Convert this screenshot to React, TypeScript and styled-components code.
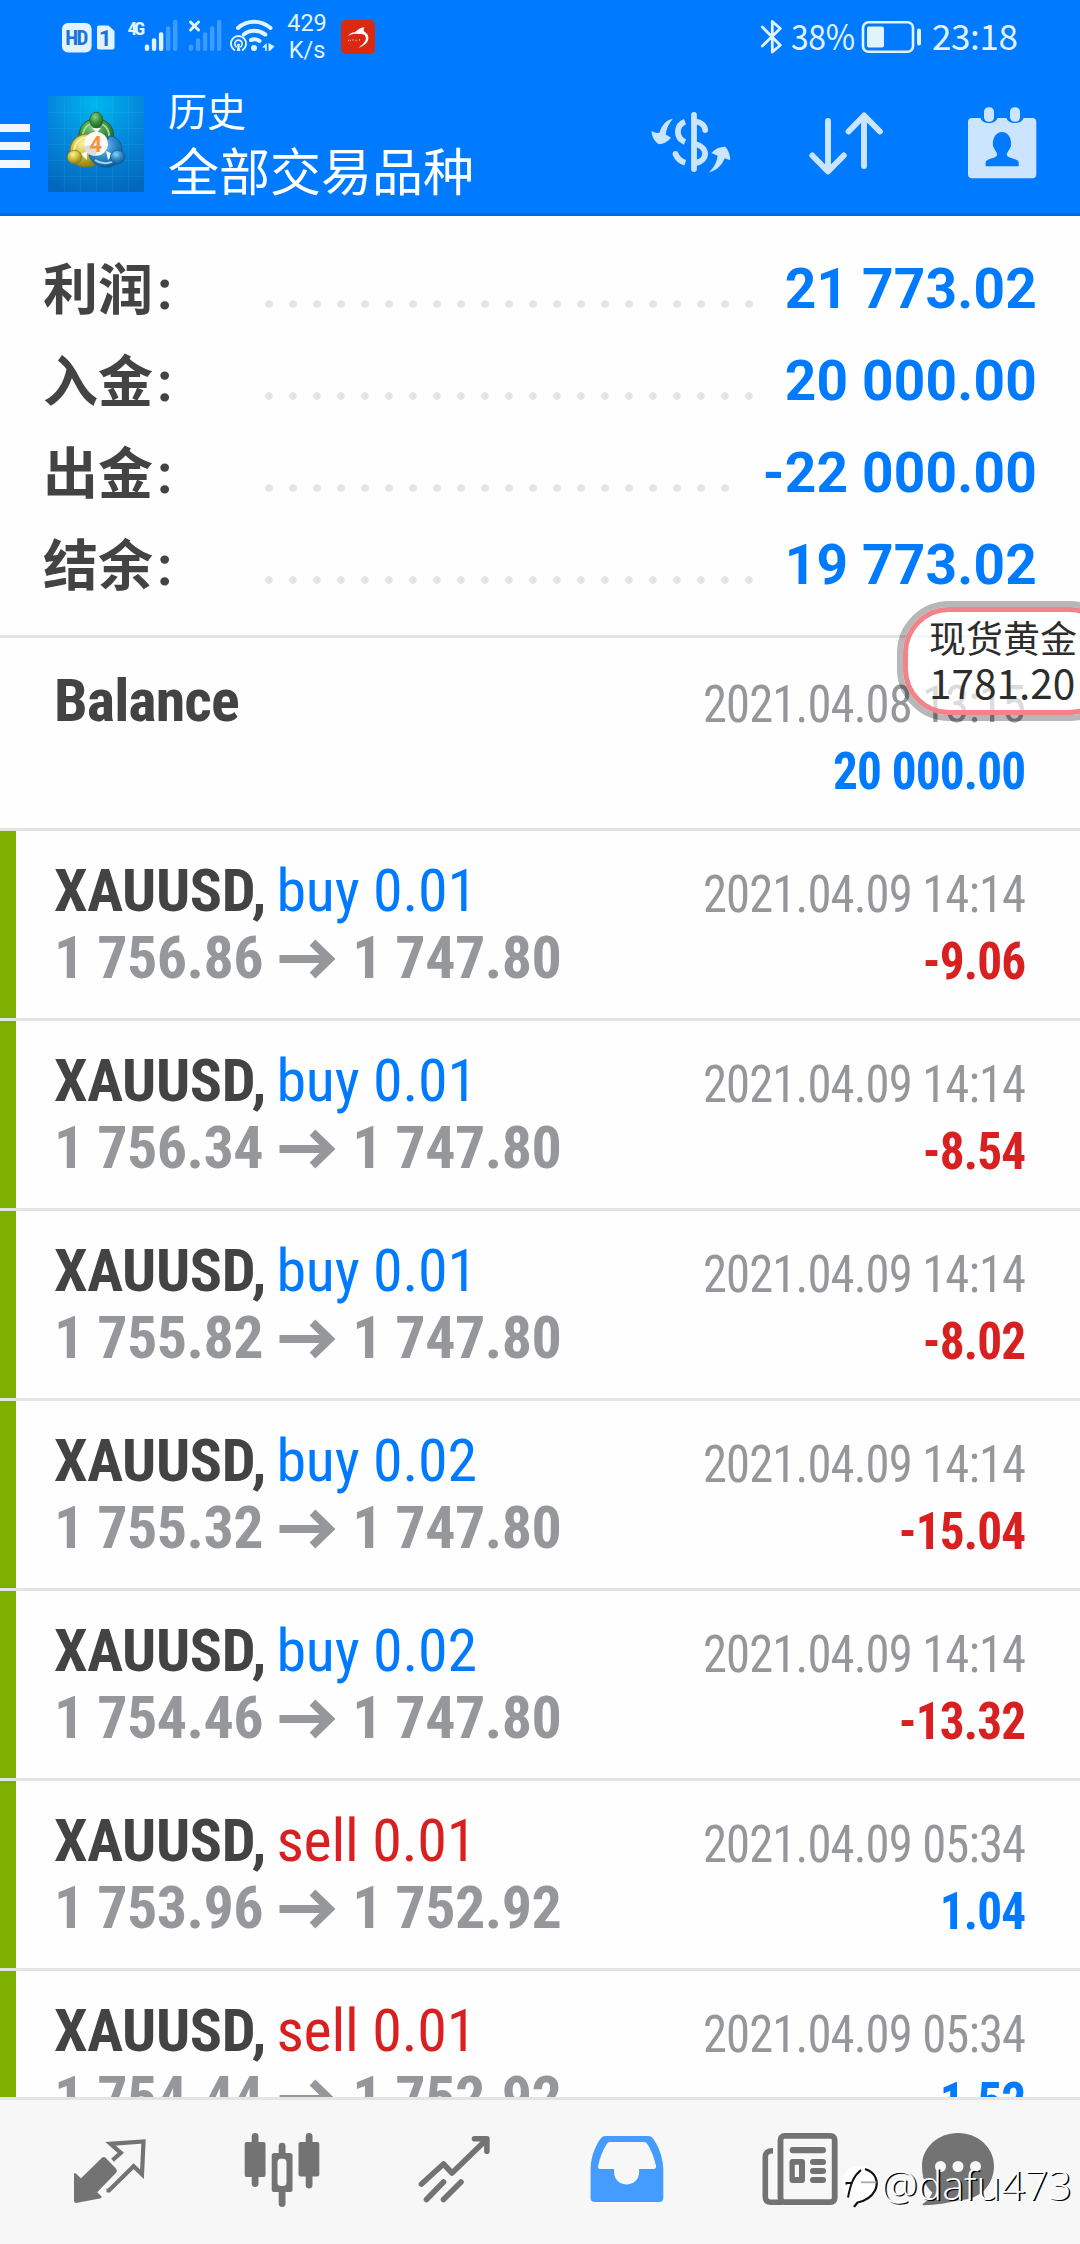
import React from "react";
import styled, { createGlobalStyle } from "styled-components";

const BLUE = "#007aff";
const RED = "#d92020";
const INK = "#434343";
const GREY = "#96979b";
const LINE = "#e4e4e4";
const STATUS = "#e0f3ff";
const ACTION = "#cce5ff";
const TAB = "#737373";

const GlobalStyle = createGlobalStyle`
  *, *::before, *::after { box-sizing: border-box; }
  body { margin: 0; background: #fff; }
  svg { display: block; flex: none; }
`;

const Screen = styled.div`
  position: relative;
  display: flex;
  flex-direction: column;
  width: 1080px;
  height: 2244px;
  overflow: hidden;
  background: #fefefe;
  font-family: Roboto, "Noto Sans CJK SC", sans-serif;
`;

/* ---------- header ---------- */

const Header = styled.header`
  flex: none;
  height: 216px;
  background: ${BLUE};
  border-bottom: 3px solid #0069db;
`;

const StatusBar = styled.div`
  display: flex;
  align-items: center;
  height: 73px;
  padding: 0 60px;
  color: ${STATUS};
`;

const NetSpeed = styled.div`
  width: 48px;
  margin: 0 10px 0 7px;
  font-size: 23.5px;
  line-height: 27px;
  text-align: center;
`;

const Spacer = styled.div`
  flex: 1;
`;

const StatusText = styled.div<{ $width: number; $left: number; $narrow?: boolean }>`
  width: ${(p) => p.$width}px;
  margin: -3px 0 0 ${(p) => p.$left}px;
  font-family: "Noto Sans CJK SC", sans-serif;
  font-size: 35px;
  line-height: 70px;
  letter-spacing: -0.4px;
  white-space: nowrap;
  transform: ${(p) => (p.$narrow ? "scaleX(0.91)" : "none")};
  transform-origin: left;
`;

const Toolbar = styled.div`
  display: flex;
  align-items: flex-start;
  padding: 23px 42px 0 0;
`;

const Burger = styled.div`
  display: grid;
  gap: 10px;
  width: 30px;
  margin: 28px 18px 0 0;
`;

const BurgerBar = styled.span`
  height: 8px;
  background: #f0f7ff;
`;

const Titles = styled.div`
  flex: 1;
  margin: -12px 0 0 24px;
  color: #fff;
  font-family: "Noto Sans CJK SC", sans-serif;
`;

const Title = styled.div`
  font-size: 39px;
  line-height: 50px;
`;

const Subtitle = styled.div`
  font-size: 51px;
  line-height: 70px;
`;

const Actions = styled.div`
  display: grid;
  grid-template-columns: 157px 160px 72px;
`;

/* ---------- summary ---------- */

const Summary = styled.section`
  flex: none;
  height: 422px;
  padding: 27px 43px 0 43px;
  border-bottom: 3px solid ${LINE};
`;

const SummaryRow = styled.div`
  display: flex;
  height: 92px;
  line-height: 92px;
  font-size: 55px;
`;

const SummaryLabel = styled.span`
  width: 214px;
  padding-top: 1px;
  color: ${INK};
  font-weight: 700;
`;

const Colon = styled.span`
  margin-left: 4px;
`;

const Leader = styled.span`
  flex: 1;
  margin-right: 21px;
  background: radial-gradient(circle at 12px 61px, #e4e4e4 3.4px, rgba(228, 228, 228, 0) 4.2px) 0 0 / 24px 92px repeat-x;
`;

const SummaryValue = styled.span`
  color: ${BLUE};
  font-weight: 700;
  letter-spacing: 0.2px;
  white-space: nowrap;
`;

/* ---------- deals ---------- */

const Deals = styled.section`
  flex: 1;
  min-height: 0;
  overflow: hidden;
  font-family: "Roboto Condensed", Roboto, sans-serif;
`;

const Deal = styled.article<{ $marked?: boolean }>`
  display: flex;
  justify-content: space-between;
  height: ${(p) => (p.$marked ? 190 : 193)}px;
  padding: ${(p) => (p.$marked ? 27 : 30)}px 55px 0 54px;
  border-bottom: 3px solid ${LINE};
  background: ${(p) => (p.$marked ? "linear-gradient(#7db000, #7db000) 0 0 / 16px 100% no-repeat padding-box" : "none")};
  line-height: 67px;
  white-space: nowrap;
`;

const DealMain = styled.div`
  margin-top: -1px;
  font-size: 60px;
`;

const Symbol = styled.div<{ $tight?: boolean }>`
  color: ${INK};
  font-weight: 700;
  letter-spacing: ${(p) => (p.$tight ? -0.9 : -0.4)}px;
`;

const Side = styled.span<{ $sell?: boolean }>`
  margin-left: -3px;
  color: ${(p) => (p.$sell ? RED : BLUE)};
  font-weight: 400;
  letter-spacing: -0.2px;
`;

const Prices = styled.div`
  display: flex;
  align-items: center;
  height: 67px;
  color: ${GREY};
  font-weight: 700;
  letter-spacing: -0.5px;
`;

const DealSide = styled.div`
  padding-top: 3px;
  font-size: 51px;
  text-align: right;
`;

const Time = styled.div`
  color: ${GREY};
  letter-spacing: -0.9px;
  transform: scaleX(0.953);
  transform-origin: right;
`;

const Profit = styled.div<{ $loss?: boolean }>`
  color: ${(p) => (p.$loss ? RED : BLUE)};
  font-weight: 700;
  letter-spacing: -0.9px;
  transform: scaleX(0.966);
  transform-origin: right;
`;

/* ---------- tabs ---------- */

const Tabs = styled.nav`
  flex: none;
  display: grid;
  grid-template-columns: 172px 172px 173px 173px 158px 80px;
  height: 147px;
  padding: 30px 0 0 70px;
  background: #f7f7f7;
  border-top: 3px solid ${LINE};
`;

/* ---------- overlays ---------- */

const Ticker = styled.aside`
  position: absolute;
  left: 897px;
  top: 601px;
  width: 224px;
  height: 120px;
  border: 6px solid rgba(0, 0, 0, 0.28);
  border-radius: 52px;
`;

const TickerFace = styled.div`
  height: 108px;
  padding: 3px 0 0 21px;
  border: 5px solid #f08488;
  border-radius: 46px;
  background: rgba(255, 255, 255, 0.66);
  background-clip: padding-box;
  color: #2d2d2d;
  font-family: "Noto Sans CJK SC", sans-serif;
  white-space: nowrap;
`;

const TickerName = styled.div`
  font-size: 37px;
  line-height: 44px;
`;

const TickerPrice = styled.div`
  font-size: 40.5px;
  line-height: 46px;
`;

const Watermark = styled.div`
  position: absolute;
  left: 840px;
  top: 2154px;
  display: flex;
  align-items: center;
  height: 60px;
  color: #fff;
  font-family: "Open Sans", sans-serif;
  font-size: 41.3px;
  font-weight: 300;
  line-height: 60px;
  text-shadow: 1.6px 1.2px 0 #000;
  white-space: nowrap;
`;

const Signals = () => (
  <svg width="216" height="40" viewBox="60 16.5 216 40" fill={STATUS}>
    <rect x="62" y="22.5" width="29.6" height="29.5" rx="6" />
    <text x="76.8" y="44.3" fontFamily="Roboto Condensed" fontWeight="700" fontSize="21" textLength="23" textAnchor="middle" fill="#1a74d8">HD</text>
    <path d="M99 25h9.500l6 5.500v16.500a2 2 0 0 1-2 2h-13.500a2 2 0 0 1-2-2v-20a2 2 0 0 1 2-2z" />
    <text x="105.200" y="45" fontFamily="Roboto" fontWeight="700" fontSize="22" textAnchor="middle" fill="#1a74d8">1</text>
    <text x="127.500" y="34" fontFamily="Roboto Condensed" fontWeight="700" fontSize="19" textLength="17.500">4G</text>
    {[44, 37.7, 31.7, 25.7, 19.3].map((y, i) => (
      <g key={y}>
        <rect x={144.8 + i * 7.05} y={y} width="4.400" height={50.5 - y} rx="2" opacity={i < 3 ? 1 : 0.28} />
        <rect x={188.8 + i * 7.05} y={y} width="4.400" height={50.5 - y} rx="2" opacity="0.28" />
      </g>
    ))}
    <path d="M190.500 21.500l8 8M198.500 21.500l-8 8" stroke={STATUS} strokeWidth="3" strokeLinecap="round" />
    <g fill="none" stroke={STATUS} strokeLinecap="round">
      <path d="M238 27.500c9-8.200 23-8.200 32.500 0" strokeWidth="4" />
      <path d="M243.800 34c6-5 14.500-5 21.500 0" strokeWidth="4" />
      <path d="M251 39.500c2-1 5.500-1 8.500 1" strokeWidth="4" />
      <path d="M234.300 49.500a7.600 7.600 0 1 1 8.400 0" strokeWidth="2" />
      <path d="M236.300 46.300a3.700 3.700 0 1 1 4.400 0" strokeWidth="1.600" />
    </g>
    <circle cx="238.500" cy="44.500" r="1.500" />
    <path d="M237.700 45h1.600l1 5.500h-3.600z" />
    <circle cx="254" cy="47.600" r="3" />
    <path d="M262 47l4.700-4.500v8h-1.600v-3.500zM268.500 42.500l6 3.200-4.200 4.600h-1.800z" />
  </svg>
);

const RedBadge = () => (
  <svg width="34" height="34" viewBox="0 0 34 34">
    <rect width="34" height="34" rx="5" fill="#d92911" />
    <path d="M6.500 16.500c2-3 4.500-4.100 7.500-4.300 2.500-2.500 5-4.500 9.500-4.900-1.200 1.600-1.200 3-.3 4.300 3 1.700 4.400 4 4.200 7-.4 4.200-4 7.200-10 9.200 4.500-3.500 7.500-6 7.500-9.500 0-3.500-3-5-7.600-4.200-4.500-.8-7.800.4-10.800 2.400z" fill="#fff" />
    <path d="M7 20.500h3M11.500 20h1.500M14.500 20.500h2M18 20h1.500" stroke="#f4b5aa" strokeWidth="1.500" strokeDasharray="1 .8" />
  </svg>
);

const Bluetooth = () => (
  <svg width="24" height="40" viewBox="759 16 24 40" fill="none" stroke={STATUS} strokeWidth="2.800" strokeLinecap="round" strokeLinejoin="round">
    <path d="M762.300 26l18 18.300-8 6.700V20.500l8 7-18 17.500" />
  </svg>
);

const Battery = () => (
  <svg width="62" height="40" viewBox="860 16.500 62 40" fill={STATUS}>
    <rect x="863" y="21.700" width="50" height="29.600" rx="5.500" fill="none" stroke={STATUS} strokeWidth="2.600" />
    <rect x="867" y="26" width="17" height="21" rx="2" />
    <rect x="917" y="28" width="4" height="17" rx="2" />
  </svg>
);

const AppLogo = () => (
  <svg width="96" height="96" viewBox="0 0 96 96">
    <defs>
      <radialGradient id="sky" cx="50%" cy="8%" r="95%">
        <stop offset="0" stopColor="#00b8ee" />
        <stop offset="0.5" stopColor="#0488dc" />
        <stop offset="1" stopColor="#0368bd" />
      </radialGradient>
      <radialGradient id="leaf" cx="40%" cy="30%" r="75%">
        <stop offset="0" stopColor="#8ccf85" />
        <stop offset="0.5" stopColor="#3f9440" />
        <stop offset="1" stopColor="#1c5d2a" />
      </radialGradient>
      <radialGradient id="gold" cx="40%" cy="30%" r="75%">
        <stop offset="0" stopColor="#fbf3a0" />
        <stop offset="0.5" stopColor="#cdbb34" />
        <stop offset="1" stopColor="#857817" />
      </radialGradient>
      <radialGradient id="sea" cx="40%" cy="30%" r="75%">
        <stop offset="0" stopColor="#8fd2f4" />
        <stop offset="0.5" stopColor="#2c8bcb" />
        <stop offset="1" stopColor="#11538c" />
      </radialGradient>
    </defs>
    <rect width="96" height="96" fill="url(#sky)" />
    <path d="M16.500 0v96M32.500 0v96M48.500 0v96M64.500 0v96M80.500 0v96M0 16.500h96M0 32.500h96M0 48.500h96M0 64.500h96M0 80.500h96" stroke="#5cc3f5" strokeOpacity="0.13" />
    <path d="M31.500 45C29 32 36 23 48 23s20 9 17 22l-7 6H39z" fill="url(#leaf)" stroke="#1d6133" />
    <path d="M35 42c-1-8 4-15 13-15s14 7 13 15" fill="none" stroke="#9dd795" strokeWidth="2" />
    <path d="M42 38c-13-1-21 8-20 20 1 11 13 16 25 11l5-6-5-20z" fill="url(#gold)" stroke="#8a7b1c" />
    <path d="M42 41c-10 0-16 6-16 15" fill="none" stroke="#f7f0a4" strokeWidth="2" />
    <path d="M61 40c9 0 14 8 13 18-2 11-13 16-23 12-5-2-9-7-10-11l14-2z" fill="url(#sea)" stroke="#135d97" />
    <path d="M47 64c7 5 18 4 23-3" fill="none" stroke="#9ad7f7" strokeWidth="2" />
    <path d="M44 32h9l-4.500 5zM33 58l6-3v9zM58 55l7 3-5 6z" fill="#f2fbff" />
    <ellipse cx="48.300" cy="24" rx="6.600" ry="7.800" fill="url(#leaf)" stroke="#1d6133" strokeWidth="0.800" />
    <ellipse cx="26.500" cy="61" rx="7.200" ry="6.800" fill="url(#gold)" stroke="#8a7b1c" strokeWidth="0.800" />
    <ellipse cx="69.500" cy="61" rx="7.200" ry="6.800" fill="url(#sea)" stroke="#135d97" strokeWidth="0.800" />
    <circle cx="48" cy="47.700" r="12" fill="#fbf8f6" />
    <path d="M36.200 50c8-1 14-1 16 0l-5 9.600C41 60 37 56 36.200 50z" fill="#dcdcdc" />
    <text x="47.800" y="55.500" fontFamily="Roboto" fontWeight="700" fontSize="22" textAnchor="middle" fill="#f49438">4</text>
  </svg>
);

const CurrencyIcon = () => (
  <svg width="84" height="96" viewBox="648 96 84 96" fill="none" stroke={ACTION} strokeWidth="5.800">
    <path d="M693 115v54" strokeLinecap="round" />
    <path d="M684 121.800c-9.500 3.600-9.500 16.400 0 20.200" />
    <path d="M694 121.300c6.300.8 10 4.500 10.200 8.700" strokeLinecap="round" />
    <path d="M674.600 154c1.600 4.400 5 7.400 9.600 8.700" />
    <circle cx="674.500" cy="153.900" r="2.900" fill={ACTION} stroke="none" />
    <path d="M694 144c13.500 3 13.500 16.800 0 19.200" />
    <g fill={ACTION} stroke="none">
      <path d="M650.500 131c2.500 1.500 5 2.200 8 1.800 2-7 6-12.500 13.300-14-4.300 5.500-6.500 10-7 15.700l5.200 3.200c-3.500 3.900-7.500 6.300-12.300 6.500-4.800-3.200-6.700-7.700-7.200-13.200z" />
      <path d="M708 172.200c4.800-4.700 7.800-9.700 8.600-16.500l-6.200-2.700c3.800-4.200 8.200-6.400 14-6.300 3.200 4 4.900 8.300 4.800 13.500l-5.500-2c-2.800 7-8 12.400-15.700 14z" />
    </g>
  </svg>
);

const SortIcon = () => (
  <svg width="80" height="96" viewBox="806 96 80 96" fill="none" stroke={ACTION} strokeWidth="5.900" strokeLinecap="round" strokeLinejoin="round">
    <path d="M828 121v49M812.300 155.500l15.700 16 15.800-16M864 166v-50M848.600 131.500l15.500-16 15.800 16" />
  </svg>
);

const CalendarIcon = () => (
  <svg width="72" height="96" viewBox="966 96 72 96">
    <rect x="968" y="118" width="68.300" height="60.300" rx="4" fill={ACTION} />
    <path d="M980.500 112h17v5c0 8-17 8-17 0zM1006.500 112h17v5c0 8-17 8-17 0z" fill={BLUE} />
    <rect x="984" y="107.300" width="10" height="14.500" rx="4.500" fill={ACTION} />
    <rect x="1010" y="107.300" width="10" height="14.500" rx="4.500" fill={ACTION} />
    <path d="M985.600 166.300v-4.300c1.300-4 12-3.300 11.500-7.500-.2-3-3-4.500-4.300-9.500 0-7.500 3.200-13 9.200-13s9.200 5.500 9.200 13c-1.300 5-4.100 6.500-4.300 9.500-.500 4.200 10.500 3.500 11.800 7.500v4.300z" fill={BLUE} />
  </svg>
);

const Arrow = () => (
  <svg width="89" height="67" viewBox="1 0 89 67" fill="none" stroke={GREY} strokeWidth="8.200">
    <path d="M17.500 35h49M50.500 18.500l17 16.500-17 16.500" />
  </svg>
);

const TradeTab = () => (
  <svg width="80" height="80" viewBox="70 2130 80 80">
    <path d="M76 2203q-2-.5-2-2.500v-27.300h1.500l5.500 5 21-20.500q1.800-1.300 3.600 0l10.500 11q1.500 2 0 4l-19 19.500 4.500 4.300-.5 1.700z" fill={TAB} />
    <path d="M106.500 2190.500h2.500l24.600-24.300 8.400 8 1.500-32.700-33 2.300 10.300 9-8.300 7.500" fill="none" stroke={TAB} strokeWidth="4.200" />
  </svg>
);

const ChartTab = () => (
  <svg width="80" height="80" viewBox="241.500 2130 80 80" fill={TAB}>
    <rect x="251.200" y="2133" width="6.800" height="54" rx="3.400" />
    <rect x="244.200" y="2142" width="20.800" height="35" rx="2" />
    <rect x="278.200" y="2142.700" width="6.800" height="64.300" rx="3.400" />
    <rect x="271.200" y="2153" width="20.800" height="39" rx="2.500" />
    <rect x="277" y="2158.700" width="9" height="27.300" rx="3.500" fill="#f7f7f7" />
    <rect x="305.200" y="2133" width="6.800" height="55.500" rx="3.400" />
    <rect x="298" y="2142" width="20.800" height="34.500" rx="2" />
  </svg>
);

const TrendTab = () => (
  <svg width="80" height="80" viewBox="413.500 2130 80 80" fill="none" stroke={TAB} strokeWidth="5.600" strokeLinecap="round">
    <path d="M421 2184l22-20 8.500 9 34-33M474 2138.800h12.400v12.500" strokeLinejoin="round" />
    <path d="M443 2182l-17 17.500M460.500 2182l-17.500 17.500" />
  </svg>
);

const HistoryTab = () => (
  <svg width="80" height="80" viewBox="586.700 2130 80 80">
    <path d="M590.300 2168c.5-12 5-23 10.500-30q1.500-2 4-2h43.500q2.500 0 4 2c5.500 7 10 18 10.700 30v30q0 4-4 4h-64.700q-4 0-4-4z" fill="#449cff" />
    <path d="M606.500 2144q1-2 3-2h34q2.500 0 3.500 2c4 6 7 14 8.700 22q.3 3-2.500 3h-14.400v3c0 16.500-25 16.500-25 0v-3h-14q-2.500 0-2-3c1.700-8 4.700-16 8.700-22z" fill="#f7f7f7" />
  </svg>
);

const NewsTab = () => (
  <svg width="80" height="80" viewBox="760 2130 80 80" fill="none" stroke={TAB}>
    <path d="M773 2150.700c-5.500 0-7.700 2-7.700 6.300v39.500q0 5.700 5.500 5.700h12" strokeWidth="5.600" />
    <rect x="780.500" y="2135.900" width="54.200" height="66.200" rx="4" strokeWidth="5.800" />
    <g fill={TAB} stroke="none">
      <rect x="789.700" y="2147" width="36.200" height="6.300" rx="3" />
      <path fillRule="evenodd" d="M792.500 2159h9.500q3 0 3 3v18q0 3-3 3h-9.500q-3 0-3-3v-18q0-3 3-3zm2.300 5.700v12.300h4.200v-12.300z" />
      <rect x="810" y="2159" width="16" height="6" rx="3" />
      <rect x="810" y="2168" width="16" height="6" rx="3" />
      <rect x="810" y="2177" width="16" height="6" rx="3" />
    </g>
  </svg>
);

const ChatTab = () => (
  <svg width="80" height="80" viewBox="918 2130 80 80">
    <path d="M958 2133c20 0 36 14.500 36 33s-14 34-34 34c-12 3-24 5-36.500 5.200-1.500-.5-1-1.700.5-2.300 4-2.500 7-6.400 8.300-10.400C925 2186 922 2177 922 2166c0-18.500 16-33 36-33z" fill={TAB} />
    <circle cx="940.500" cy="2166.500" r="5.500" fill="#f7f7f7" />
    <circle cx="958" cy="2166.500" r="5.500" fill="#f7f7f7" />
    <circle cx="975.500" cy="2166.500" r="5.500" fill="#f7f7f7" />
  </svg>
);

const WatermarkMark = () => (
  <svg width="41" height="60" viewBox="840 2154 41 60">
    <circle cx="859" cy="2183.500" r="17.500" fill="#fff" />
    <path d="M853 2198l13 2-8 5-4.500 3z" fill="#fff" />
    <path d="M846.500 2184.500v-1.500h5.500M848 2197.500c2.500-13 5-21 13-27.500" fill="none" stroke="#111" strokeWidth="2" />
    <path d="M865 2169c11 3.500 14 13 10 21.500-4 7.500-10 10.500-17.500 12-1.500 2-2.500 3-3.500 4.500" fill="none" stroke="#111" strokeWidth="2.200" />
    <path d="M861 2182.300h15.500" stroke="#aaa" strokeWidth="1.800" />
  </svg>
);

const totals = [
  ["利润", "21 773.02"],
  ["入金", "20 000.00"],
  ["出金", "-22 000.00"],
  ["结余", "19 773.02"],
];

const deals = [
  { side: "buy", lots: "0.01", open: "1 756.86", close: "1 747.80", time: "2021.04.09 14:14", profit: "-9.06" },
  { side: "buy", lots: "0.01", open: "1 756.34", close: "1 747.80", time: "2021.04.09 14:14", profit: "-8.54" },
  { side: "buy", lots: "0.01", open: "1 755.82", close: "1 747.80", time: "2021.04.09 14:14", profit: "-8.02" },
  { side: "buy", lots: "0.02", open: "1 755.32", close: "1 747.80", time: "2021.04.09 14:14", profit: "-15.04" },
  { side: "buy", lots: "0.02", open: "1 754.46", close: "1 747.80", time: "2021.04.09 14:14", profit: "-13.32" },
  { side: "sell", lots: "0.01", open: "1 753.96", close: "1 752.92", time: "2021.04.09 05:34", profit: "1.04" },
  { side: "sell", lots: "0.01", open: "1 754.44", close: "1 752.92", time: "2021.04.09 05:34", profit: "1.52" },
];

export default function App() {
  return (
    <Screen>
      <GlobalStyle />
      <Header>
        <StatusBar>
          <Signals />
          <NetSpeed>
            429
            <br />
            K/s
          </NetSpeed>
          <RedBadge />
          <Spacer />
          <Bluetooth />
          <StatusText $left={8} $width={69} $narrow>38%</StatusText>
          <Battery />
          <StatusText $left={10} $width={88}>23:18</StatusText>
        </StatusBar>
        <Toolbar>
          <Burger>
            <BurgerBar />
            <BurgerBar />
            <BurgerBar />
          </Burger>
          <AppLogo />
          <Titles>
            <Title>历史</Title>
            <Subtitle>全部交易品种</Subtitle>
          </Titles>
          <Actions>
            <CurrencyIcon />
            <SortIcon />
            <CalendarIcon />
          </Actions>
        </Toolbar>
      </Header>

      <Summary>
        {totals.map(([label, value]) => (
          <SummaryRow key={label}>
            <SummaryLabel>
              {label}
              <Colon>:</Colon>
            </SummaryLabel>
            <Leader />
            <SummaryValue>{value}</SummaryValue>
          </SummaryRow>
        ))}
      </Summary>

      <Deals>
        <Deal>
          <DealMain>
            <Symbol $tight>Balance</Symbol>
          </DealMain>
          <DealSide>
            <Time>2021.04.08 13:15</Time>
            <Profit>20 000.00</Profit>
          </DealSide>
        </Deal>
        {deals.map((d) => (
          <Deal key={d.open} $marked>
            <DealMain>
              <Symbol>
                XAUUSD,{" "}
                <Side $sell={d.side === "sell"}>
                  {d.side} {d.lots}
                </Side>
              </Symbol>
              <Prices>
                {d.open}
                <Arrow />
                {d.close}
              </Prices>
            </DealMain>
            <DealSide>
              <Time>{d.time}</Time>
              <Profit $loss={d.profit.startsWith("-")}>{d.profit}</Profit>
            </DealSide>
          </Deal>
        ))}
      </Deals>

      <Tabs>
        <TradeTab />
        <ChartTab />
        <TrendTab />
        <HistoryTab />
        <NewsTab />
        <ChatTab />
      </Tabs>

      <Ticker>
        <TickerFace>
          <TickerName>现货黄金</TickerName>
          <TickerPrice>1781.20</TickerPrice>
        </TickerFace>
      </Ticker>
      <Watermark>
        <WatermarkMark />
        @dafu473
      </Watermark>
    </Screen>
  );
}
